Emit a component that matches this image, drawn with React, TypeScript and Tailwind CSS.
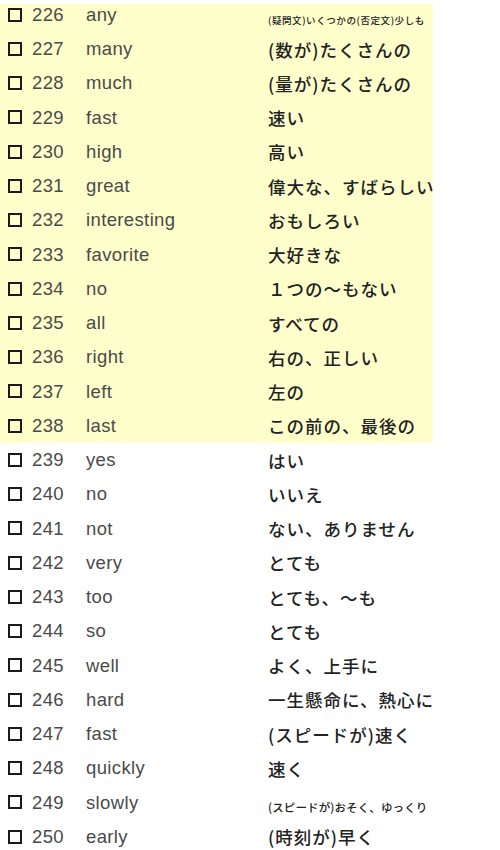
const words: [number, string, string, string?][] = [
  [226, "any", "(疑問文)いくつかの(否定文)少しも", "xs"],
  [227, "many", "(数が)たくさんの"],
  [228, "much", "(量が)たくさんの"],
  [229, "fast", "速い"],
  [230, "high", "高い"],
  [231, "great", "偉大な、すばらしい"],
  [232, "interesting", "おもしろい"],
  [233, "favorite", "大好きな"],
  [234, "no", "１つの～もない"],
  [235, "all", "すべての"],
  [236, "right", "右の、正しい"],
  [237, "left", "左の"],
  [238, "last", "この前の、最後の"],
  [239, "yes", "はい"],
  [240, "no", "いいえ"],
  [241, "not", "ない、ありません"],
  [242, "very", "とても"],
  [243, "too", "とても、～も"],
  [244, "so", "とても"],
  [245, "well", "よく、上手に"],
  [246, "hard", "一生懸命に、熱心に"],
  [247, "fast", "(スピードが)速く"],
  [248, "quickly", "速く"],
  [249, "slowly", "(スピードが)おそく、ゆっくり", "sm"],
  [250, "early", "(時刻が)早く"],
];

const Row = ({ w, first }: { w: [number, string, string, string?]; first?: boolean }) => {
  const [no, en, ja, size] = w;
  const jaClass =
    size === "xs"
      ? "text-[9.5px] tracking-[0.06em] pb-[1px]"
      : size === "sm"
      ? "text-[11.5px] tracking-[0.01em]"
      : "text-[17.5px] tracking-[1px]";
  return (
    <div className={`flex items-end pb-[3px] ${first ? "h-[27.5px]" : "h-[34.25px]"}`}>
      <div className="w-[268px] flex items-center shrink-0 font-['Liberation_Sans',_Arial,_sans-serif] text-[18.5px] tracking-[0.02em] text-[#4a4a4a]">
        <div className="ml-[8px] w-[14px] h-[14px] border-2 border-[#1a1a1a] shrink-0" />
        <span className="ml-[10px] w-[54px]">{no}</span>
        <span>{en}</span>
      </div>
      <div className={`font-['Noto_Sans_CJK_JP',_sans-serif] font-medium text-[#222] whitespace-nowrap ${jaClass}`}>
        {ja}
      </div>
    </div>
  );
};

export default function App() {
  return (
    <div className="w-[500px] h-[850px] overflow-hidden bg-white">
      <div className="mt-[4px] w-[433px] bg-[#ffffcc]">
        {words.slice(0, 13).map((w, i) => (
          <Row key={w[0]} w={w} first={i === 0} />
        ))}
      </div>
      <div>
        {words.slice(13).map((w) => (
          <Row key={w[0]} w={w} />
        ))}
      </div>
    </div>
  );
}
